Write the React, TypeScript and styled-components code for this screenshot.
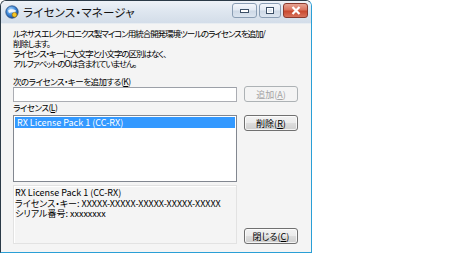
import styled, { createGlobalStyle } from "styled-components";

const GlobalStyle = createGlobalStyle`
  body {
    margin: 0;
    background: #ffffff;
  }
`;

const Window = styled.div`
  box-sizing: border-box;
  width: 312px;
  height: 253px;
  border: 1px solid #2b3a47;
  border-right-color: #2a9fd6;
  border-bottom-color: #2a9fd6;
  border-radius: 6px 6px 0 0;
  background: #f4f4f4;
  display: flex;
  flex-direction: column;
  overflow: hidden;
  font-family: "Noto Sans CJK JP", "Liberation Sans", sans-serif;
  font-feature-settings: "palt";
  font-size: 9px;
  color: #000;
`;

const TitleBar = styled.div`
  height: 22px;
  flex: none;
  display: flex;
  align-items: center;
  gap: 4px;
  padding: 0 3px 0 4px;
  background: linear-gradient(#eef2f7 0%, #dfe7f0 45%, #d3dde9 100%);
  border-bottom: 1px solid #e8edf2;
`;

const TitleText = styled.span`
  font-size: 11.5px;
  color: #111;
  letter-spacing: 0.2px;
`;

const TitleButtons = styled.div`
  margin-left: auto;
  display: flex;
  gap: 2px;
  align-self: flex-start;
  margin-top: 2px;
`;

const TitleButton = styled.div<{ $w: number; $close?: boolean }>`
  box-sizing: border-box;
  width: ${(p) => p.$w}px;
  height: 15px;
  border: 1px solid ${(p) => (p.$close ? "#8a3a2e" : "#8a9db3")};
  border-radius: 3px;
  background: ${(p) =>
    p.$close
      ? "linear-gradient(#e8a493 0%, #d9745f 45%, #c9492f 55%, #d8725b 100%)"
      : "linear-gradient(#f4f7fb 0%, #e3eaf3 45%, #ced9e6 55%, #dce5ef 100%)"};
  display: flex;
  align-items: center;
  justify-content: center;
`;

const Body = styled.div`
  flex: 1;
  display: flex;
  flex-direction: column;
  padding: 4px 12px 9px 12px;
`;

const Intro = styled.p`
  margin: 0;
  font-size: 8.5px;
  line-height: 10px;
  white-space: nowrap;
  letter-spacing: -1.05px;
`;

const Label = styled.div<{ $top: number }>`
  margin-top: ${(p) => p.$top}px;
  font-size: 8.5px;
  line-height: 10px;
  letter-spacing: -0.5px;
`;

const Row = styled.div<{ $top: number; $align: string }>`
  display: grid;
  grid-template-columns: 224px 54px;
  column-gap: 7px;
  align-items: ${(p) => p.$align};
  margin-top: ${(p) => p.$top}px;
`;

const TextInput = styled.div`
  box-sizing: border-box;
  height: 15px;
  border: 1px solid #abadb3;
  border-top-color: #9ca0a8;
  background: #ffffff;
`;

const Button = styled.button`
  box-sizing: border-box;
  width: 54px;
  height: 16px;
  padding: 0;
  border: 1px solid #707070;
  border-radius: 3px;
  background: linear-gradient(#f2f2f2 0%, #ebebeb 50%, #dddddd 51%, #cfcfcf 100%);
  box-shadow: inset 0 0 0 1px rgba(255, 255, 255, 0.75);
  color: #000;
  font: inherit;
  line-height: 13px;

  &:disabled {
    border-color: #adb2b5;
    background: #f4f4f4;
    box-shadow: none;
    color: #a3a3a3;
  }
`;

const ListBox = styled.div`
  box-sizing: border-box;
  height: 67px;
  border: 1px solid #828790;
  background: #ffffff;
  padding: 1px;
`;

const ListItem = styled.div<{ $selected?: boolean }>`
  height: 11px;
  line-height: 11px;
  padding-left: 2px;
  background: ${(p) => (p.$selected ? "#3399ff" : "transparent")};
  color: ${(p) => (p.$selected ? "#ffffff" : "#000")};
`;

const Details = styled.div`
  box-sizing: border-box;
  height: 59px;
  border: 1px solid #e2e2e2;
  box-shadow: inset 1px 1px 0 #ffffff;
  padding: 2px 1px;
  line-height: 10.5px;
`;

const AppIcon = () => (
  <svg width="14" height="14" viewBox="0 0 14 14">
    <defs>
      <radialGradient id="g" cx="40%" cy="35%" r="65%">
        <stop offset="0%" stopColor="#bfe3ff" />
        <stop offset="60%" stopColor="#3a86d8" />
        <stop offset="100%" stopColor="#1c4f9a" />
      </radialGradient>
    </defs>
    <circle cx="7" cy="7" r="6.2" fill="url(#g)" stroke="#2a4f80" strokeWidth="0.8" />
    <path d="M3 5.5 Q7 3 11 5.5 L10 8 Q7 6.5 4 8 Z" fill="#ffffff" opacity="0.85" />
    <circle cx="9.5" cy="9.8" r="2.4" fill="#f5c623" stroke="#9a6a00" strokeWidth="0.6" />
  </svg>
);

export default function App() {
  return (
    <>
      <GlobalStyle />
      <Window>
        <TitleBar>
          <AppIcon />
          <TitleText>ライセンス・マネージャ</TitleText>
          <TitleButtons>
            <TitleButton $w={25}>
              <svg width="9" height="4" viewBox="0 0 9 4">
                <rect x="0.5" y="0.5" width="8" height="3" fill="#ffffff" stroke="#3b4f66" />
              </svg>
            </TitleButton>
            <TitleButton $w={22}>
              <svg width="8" height="7" viewBox="0 0 8 7">
                <rect x="0.5" y="0.5" width="7" height="6" fill="#ffffff" stroke="#3b4f66" />
                <rect x="2" y="2" width="4" height="3" fill="#dfe7f0" />
              </svg>
            </TitleButton>
            <TitleButton $w={25} $close>
              <svg width="10" height="9" viewBox="0 0 10 9">
                <path d="M1.5 1 L8.5 8 M8.5 1 L1.5 8" stroke="#ffffff" strokeWidth="2.2" />
              </svg>
            </TitleButton>
          </TitleButtons>
        </TitleBar>
        <Body>
          <Intro>
            ルネサス エレクトロニクス製マイコン用統合開発環境ツールのライセンスを追加/
            <br />
            削除します。
            <br />
            ライセンス・キーに大文字と小文字の区別はなく、
            <br />
            アルファベットのOは含まれていません。
          </Intro>
          <Label $top={8}>
            次のライセンス・キーを追加する(<u>K</u>)
          </Label>
          <Row $top={0} $align="center">
            <TextInput />
            <Button disabled>
              追加(<u>A</u>)
            </Button>
          </Row>
          <Label $top={0}>
            ライセンス(<u>L</u>)
          </Label>
          <Row $top={3} $align="start">
            <ListBox>
              <ListItem $selected>RX License Pack 1 (CC-RX)</ListItem>
            </ListBox>
            <Button>
              削除(<u>R</u>)
            </Button>
          </Row>
          <Row $top={3} $align="end">
            <Details>
              RX License Pack 1 (CC-RX)
              <br />
              ライセンス・キー: XXXXX-XXXXX-XXXXX-XXXXX-XXXXX
              <br />
              シリアル番号: xxxxxxxx
            </Details>
            <Button>
              閉じる(<u>C</u>)
            </Button>
          </Row>
        </Body>
      </Window>
    </>
  );
}
